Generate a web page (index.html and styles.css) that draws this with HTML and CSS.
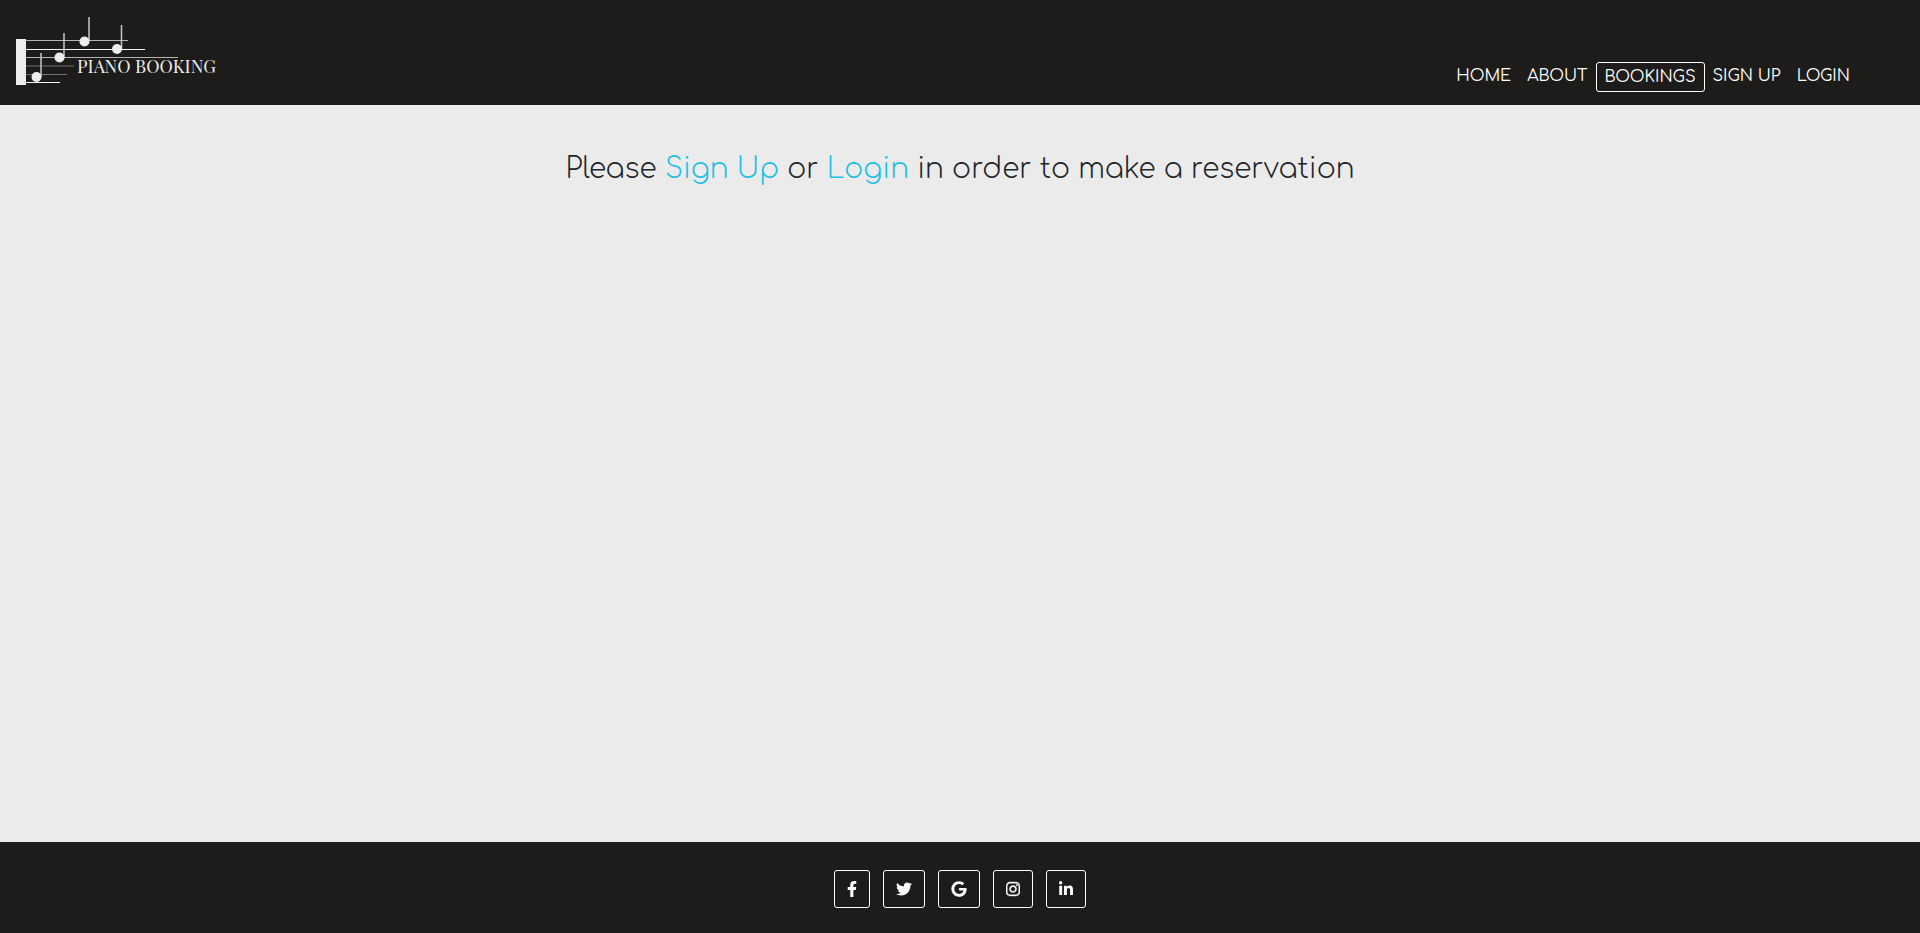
FILE: index.html
```html
<!DOCTYPE html>
<html lang="en">
<head>
<meta charset="utf-8">
<meta name="viewport" content="width=device-width, initial-scale=1">
<title>Piano Booking</title>
<link rel="stylesheet" href="styles.css">
</head>
<body>
<header class="site-header">
  <a class="logo" href="#" aria-label="Piano Booking">
    <svg width="224" height="90" viewBox="0 0 224 90">
      <path class="bar" d="M16 39h10v46H16z"/>
      <path class="staff" d="M26 40.500H128M26 57.500H178"/>
      <path class="staff strong" d="M26 49.500H145M26 82.500H60"/>
      <path class="staff dim" d="M26 66H74M26 74.500H67"/>
      <path class="stem" d="M41 53V77M64 33V57M89 17V41M121.500 25V49"/>
      <circle class="note" cx="36.500" cy="77" r="5"/>
      <circle class="note" cx="59.500" cy="57.500" r="5"/>
      <circle class="note" cx="84.500" cy="41.500" r="5"/>
      <circle class="note" cx="117" cy="49" r="5"/>
      <text class="wordmark" x="77" y="73">PIANO BOOKING</text>
    </svg>
  </a>
  <nav class="nav" aria-label="Main">
    <a class="nav-link" href="#">HOME</a>
    <a class="nav-link" href="#">ABOUT</a>
    <a class="nav-link active" href="#" aria-current="page">BOOKINGS</a>
    <a class="nav-link" href="#">SIGN UP</a>
    <a class="nav-link" href="#">LOGIN</a>
  </nav>
</header>
<main class="content">
  <h1 class="message">Please <a href="#">Sign Up</a> or <a href="#">Login</a> in order to make a reservation</h1>
</main>
<footer class="site-footer">
  <a class="social" href="#" aria-label="Facebook"><svg width="10" height="16" viewBox="0 0 320 512"><path d="M279.140 288l14.220-92.660h-88.910v-60.130c0-25.350 12.420-50.060 52.240-50.060h40.420V6.260S260.430 0 225.360 0c-73.220 0-121.080 44.380-121.080 124.720v70.620H22.890V288h81.390v224h100.170V288z"/></svg></a>
  <a class="social" href="#" aria-label="Twitter"><svg width="16" height="16" viewBox="0 0 512 512"><path d="M459.370 151.716c.325 4.548.325 9.097.325 13.645 0 138.720-105.583 298.558-298.558 298.558-59.452 0-114.680-17.219-161.137-47.106 8.447.974 16.568 1.299 25.340 1.299 49.055 0 94.213-16.568 130.274-44.832-46.132-.975-84.792-31.188-98.112-72.772 6.498.974 12.995 1.624 19.818 1.624 9.421 0 18.843-1.300 27.614-3.573-48.081-9.747-84.143-51.980-84.143-102.985v-1.299c13.969 7.797 30.214 12.670 47.431 13.319-28.264-18.843-46.781-51.005-46.781-87.391 0-19.492 5.197-37.360 14.294-52.954 51.655 63.675 129.300 105.258 216.365 109.807-1.624-7.797-2.599-15.918-2.599-24.040 0-57.828 46.782-104.934 104.934-104.934 30.213 0 57.502 12.670 76.670 33.137 23.715-4.548 46.456-13.320 66.599-25.340-7.798 24.366-24.366 44.833-46.132 57.827 21.117-2.273 41.584-8.122 60.426-16.243-14.292 20.791-32.161 39.308-52.628 54.253z"/></svg></a>
  <a class="social" href="#" aria-label="Google"><svg width="16" height="16" viewBox="0 0 488 512"><path d="M488 261.800C488 403.300 391.100 504 248 504 110.800 504 0 393.200 0 256S110.800 8 248 8c66.800 0 123 24.500 166.300 64.900l-67.500 64.900C258.500 52.600 94.300 116.600 94.300 256c0 86.500 69.100 156.600 153.700 156.600 98.200 0 135-70.400 140.800-106.900H248v-85.300h236.100c2.300 12.700 3.900 24.900 3.900 41.400z"/></svg></a>
  <a class="social" href="#" aria-label="Instagram"><svg class="bold" width="14" height="16" viewBox="0 0 448 512"><path d="M224.100 141c-63.600 0-114.900 51.300-114.900 114.900s51.300 114.900 114.900 114.900S339 319.500 339 255.900 287.700 141 224.100 141zm0 189.600c-41.100 0-74.700-33.500-74.700-74.700s33.500-74.700 74.700-74.700 74.700 33.500 74.700 74.700-33.600 74.700-74.700 74.700zm146.400-194.300c0 14.900-12 26.800-26.800 26.800-14.900 0-26.800-12-26.800-26.800s12-26.800 26.800-26.800 26.800 12 26.800 26.800zm76.100 27.200c-1.700-35.900-9.900-67.700-36.200-93.900-26.200-26.200-58-34.400-93.900-36.200-37-2.100-147.900-2.100-184.900 0-35.800 1.700-67.600 9.900-93.900 36.100s-34.400 58-36.200 93.900c-2.100 37-2.100 147.900 0 184.900 1.700 35.900 9.900 67.700 36.200 93.900s58 34.400 93.900 36.200c37 2.100 147.900 2.100 184.900 0 35.900-1.700 67.700-9.900 93.900-36.200 26.200-26.200 34.400-58 36.200-93.900 2.100-37 2.100-147.800 0-184.800zM398.800 388c-7.800 19.600-22.900 34.700-42.600 42.600-29.500 11.700-99.500 9-132.100 9s-102.700 2.600-132.100-9c-19.600-7.800-34.700-22.900-42.600-42.600-11.700-29.500-9-99.500-9-132.100s-2.600-102.700 9-132.100c7.800-19.600 22.900-34.700 42.600-42.600 29.500-11.700 99.500-9 132.100-9s102.700-2.600 132.100 9c19.600 7.800 34.700 22.900 42.600 42.600 11.700 29.500 9 99.500 9 132.100s2.700 102.700-9 132.100z"/></svg></a>
  <a class="social" href="#" aria-label="LinkedIn"><svg width="14" height="16" viewBox="0 0 448 512"><path d="M100.280 448H7.400V148.900h92.880zM53.790 108.100C24.090 108.100 0 83.500 0 53.800a53.790 53.790 0 0 1 107.580 0c0 29.700-24.100 54.300-53.790 54.300zM447.900 448h-92.680V302.400c0-34.700-.7-79.200-48.290-79.200-48.290 0-55.690 37.700-55.690 76.700V448h-92.780V148.900h89.080v40.800h1.300c12.400-23.500 42.690-48.300 87.880-48.300 94 0 111.280 61.900 111.280 142.300V448z"/></svg></a>
</footer>
</body>
</html>
```
FILE: styles.css
```css
* { box-sizing: border-box; }

body {
  margin: 0;
  min-height: 100vh;
  display: flex;
  flex-direction: column;
  background: #ebebeb;
  color: #212529;
  font-family: Comfortaa, Lato, sans-serif;
}

a { text-decoration: none; }

.site-header {
  display: flex;
  flex-wrap: wrap;
  justify-content: space-between;
  align-items: flex-end;
  padding-right: 62px;
  background: #1d1c1a;
}

.logo { display: block; padding-bottom: 15px; }
.logo svg { display: block; }
.bar, .note { fill: #efedec; }
.staff { fill: none; stroke: #b5b4b2; stroke-width: 1; }
.staff.strong { stroke: #f4f3f2; }
.staff.dim { stroke: #727170; }
.stem { fill: none; stroke: #c8c7c5; stroke-width: 1.500; }
.wordmark {
  fill: #efedec;
  font-family: "Playfair Display", "Liberation Serif", serif;
  font-size: 18px;
}

.nav { display: flex; flex-wrap: wrap; align-items: flex-start; padding-bottom: 13px; }
.nav-link {
  padding: 0 8px;
  color: #fff;
  font-size: 16px;
  line-height: 28px;
}
.nav-link.active {
  border: 1px solid #fff;
  border-radius: 3px;
}

.content { flex: 1; padding: 44px 16px; }
.message {
  margin: 0;
  text-align: center;
  font-family: Comfortaa, "DejaVu Sans", sans-serif;
  font-size: 28px;
  font-weight: 300;
  line-height: 40px;
}
.message a { color: #1fbfe6; }

.site-footer {
  display: flex;
  flex-wrap: wrap;
  justify-content: center;
  gap: 12px 13px;
  padding: 28px 16px 25px;
  background: #1d1c1a;
}
.social {
  padding: 10px 12px;
  border: 1px solid #fff;
  border-radius: 3px;
}
.social svg { display: block; fill: #fff; }
.social .bold { stroke: #fff; stroke-width: 12; }
```
